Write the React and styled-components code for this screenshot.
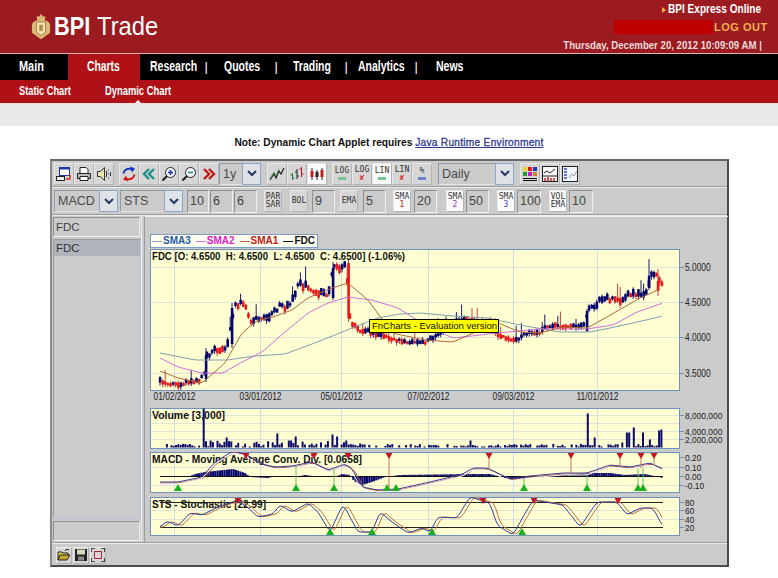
import React from "react";
import styled, { createGlobalStyle } from "styled-components";

const GlobalStyle = createGlobalStyle`
  html, body { margin: 0; padding: 0; background: #fff; }
  body { font-family: "Liberation Sans", Arial, sans-serif; }
`;

/* no narrow face is installed, the header text is squeezed sideways instead */
const Squeeze = styled.span`
  display: inline-block;
  width: ${({ $w }) => ($w ? `${$w}px` : "auto")};
  white-space: nowrap;
  transform: scaleX(${({ $x }) => $x});
  transform-origin: ${({ $right }) => ($right ? "right" : "left")} center;
`;

/* ---------- site header ---------- */
const Page = styled.div`
  width: 778px;
  height: 578px;
  overflow: hidden;
  background: #fff;
`;

const TopBar = styled.header`
  height: 53px;
  background: #9b1b20;
  border-bottom: 1px solid #dcb4b4;
  display: flex;
  justify-content: space-between;
`;

const Brand = styled.div`
  display: flex;
  align-items: center;
  padding: 0 0 1px 31px;
  gap: 3px;
  color: #fff;
  font-size: 25px;
  line-height: 1;
  font-weight: 400;
`;

const BrandBold = styled(Squeeze)`
  font-weight: 700;
  margin-right: 4px;
`;

const Account = styled.div`
  width: 250px;
  padding: 2px 16px 0 0;
  box-sizing: border-box;
  display: flex;
  flex-direction: column;
  align-items: flex-end;
`;

const ExpressLink = styled.div`
  display: flex;
  align-items: center;
  gap: 2px;
  height: 15px;
  color: #fff;
  font-size: 12px;
  font-weight: 700;
  line-height: 15px;
`;

const ExpressMark = styled.i`
  width: 0;
  height: 0;
  border: 3px solid transparent;
  border-left: 4px solid #f0b040;
  border-right: 0;
`;

const LogoutRow = styled.div`
  display: flex;
  height: 14px;
  margin-top: 3px;
  align-items: center;
`;

const Redacted = styled.div`
  width: 99px;
  height: 14px;
  background: #c00000;
`;

const Logout = styled.div`
  color: #f2b350;
  font-weight: 700;
  font-size: 11px;
  letter-spacing: 0.5px;
  width: 48px;
  padding-left: 1px;
  white-space: nowrap;
`;

const DateLine = styled.div`
  margin-top: 4px;
  color: #f0dcdc;
  font-size: 11px;
  line-height: 14px;
  font-weight: 700;
`;

const NavBar = styled.nav`
  height: 26px;
  background: #000;
  display: flex;
`;

const NavItem = styled.div`
  width: ${({ $w }) => $w}px;
  padding-left: ${({ $pl }) => $pl}px;
  box-sizing: border-box;
  line-height: 25px;
  color: #fff;
  font-size: 14px;
  font-weight: 700;
  background: ${({ $active }) => ($active ? "#b01116" : "transparent")};
  display: flex;
  justify-content: space-between;
`;

const NavBarSep = styled.i`
  font-style: normal;
  font-weight: 400;
  font-size: 13px;
  margin-right: 2px;
`;

const SubNav = styled.div`
  height: 23px;
  background: #b01116;
  border-bottom: 1px solid #f6dede;
  display: flex;
  color: #fff;
  font-size: 12.5px;
  font-weight: 700;
  line-height: 22px;
  padding-left: 19px;
  gap: 34px;
`;

const SubLink = styled.div`
  position: relative;
  width: ${({ $w }) => $w}px;
  &[data-on="true"]::after {
    content: "";
    position: absolute;
    left: 50%;
    bottom: 0;
    margin-left: -3px;
    border: 3px solid transparent;
    border-top: 0;
    border-bottom-color: #fff;
  }
`;

const Band = styled.div`
  height: 22px;
  background: #e9e9e9;
`;

const Note = styled.p`
  margin: 0;
  height: 33px;
  line-height: 34px;
  text-align: center;
  font-size: 10.2px;
  font-weight: 700;
  color: #111;
  a {
    color: #2f3a8f;
    text-decoration: underline;
    font-weight: 400;
    letter-spacing: 0.25px;
    -webkit-text-stroke: 0.3px #2f3a8f;
  }
`;

/* ---------- applet frame ---------- */
const Applet = styled.section`
  width: 679px;
  height: 408px;
  margin-left: 50px;
  box-sizing: border-box;
  background: #cbcbcb;
  border: 2px solid #5f5f5f;
  border-color: #666 #4a4a4a #4a4a4a #8a8a8a;
  display: flex;
  flex-direction: column;
  color: #444;
`;

const Toolbar = styled.div`
  flex: none;
  height: ${({ $h }) => $h}px;
  box-sizing: border-box;
  display: flex;
  align-items: center;
  padding-left: 2px;
  border-bottom: 1px solid #9c9c9c;
  box-shadow: 0 1px 0 #ececec;
  margin-bottom: 1px;
`;

const Group = styled.div`
  display: flex;
  margin-left: ${({ $ml }) => $ml || 0}px;
`;

const IconBtn = styled.div`
  width: 20px;
  height: 22px;
  box-sizing: border-box;
  display: flex;
  align-items: center;
  justify-content: center;
  background: ${({ $on }) => ($on ? "#fafafa" : "#d6d6d6")};
  border: 1px solid;
  border-color: #e8e8e8 #b4b4b4 #b4b4b4 #e8e8e8;
`;

const TextBtn = styled.div`
  width: ${({ $w }) => $w || 20}px;
  height: 22px;
  margin-left: ${({ $ml }) => $ml || 0}px;
  box-sizing: border-box;
  display: flex;
  flex-direction: column;
  align-items: center;
  justify-content: center;
  background: ${({ $on }) => ($on ? "#fafafa" : "#d6d6d6")};
  border: 1px solid;
  border-color: #e8e8e8 #b4b4b4 #b4b4b4 #e8e8e8;
  font-family: "DejaVu Sans Mono", "Liberation Mono", monospace;
  font-size: 8px;
  line-height: 8px;
  color: #333;
`;

const Mark = styled.span`
  color: ${({ $c }) => $c};
  line-height: 8px;
  font-size: 8px;
`;

const Flat = styled.i`
  display: block;
  width: 8px;
  height: 3px;
  margin-top: 2px;
  background: ${({ $c }) => $c};
`;

const SelectBox = styled.div`
  width: ${({ $w }) => $w}px;
  height: 22px;
  margin-left: ${({ $ml }) => $ml || 0}px;
  box-sizing: border-box;
  display: flex;
  justify-content: space-between;
  border: 1px solid;
  border-color: #8d9cad #e4e4e4 #e4e4e4 #8d9cad;
  font-size: 12.5px;
  line-height: 20px;
  padding-left: 3px;
  color: #4a4a4a;
`;

const SelectArrow = styled.div`
  width: 17px;
  margin: -1px -1px -1px 0;
  display: flex;
  align-items: center;
  justify-content: center;
  background: #dfe2e6;
  border: 1px solid #8ea6c6;
`;

const Field = styled.div`
  width: ${({ $w }) => $w}px;
  height: 23px;
  margin-left: ${({ $ml }) => $ml || 0}px;
  box-sizing: border-box;
  border: 1px solid;
  border-color: #8f8f8f #efefef #efefef #8f8f8f;
  font-size: 12.5px;
  line-height: 20px;
  padding-left: 2px;
  color: #444;
`;

const Workspace = styled.div`
  flex: none;
  height: 326px;
  display: flex;
  border-bottom: 1px solid #9c9c9c;
  box-shadow: 0 1px 0 #ececec;
`;

const Sidebar = styled.aside`
  flex: none;
  width: 90px;
  padding: 1px 0 1px 1px;
  box-sizing: border-box;
  display: flex;
  flex-direction: column;
  gap: 2px;
  border-right: 1px solid #f0f0f0;
`;

const SymbolInput = styled.div`
  flex: none;
  height: 20px;
  width: 87px;
  box-sizing: border-box;
  border: 1px solid;
  border-color: #8f8f8f #efefef #efefef #8f8f8f;
  font-size: 11.5px;
  line-height: 18px;
  padding-left: 2px;
`;

const SymbolList = styled.div`
  flex: 1;
  width: 88px;
  box-sizing: border-box;
  border: 1px solid;
  border-color: #9a9a9a #b5c6da #b5c6da #9a9a9a;
`;

const SymbolRow = styled.div`
  height: 16px;
  background: #b1b4ba;
  font-size: 11.5px;
  line-height: 16px;
  padding-left: 2px;
  color: #333;
`;

const StatusBox = styled.div`
  flex: none;
  height: 20px;
  width: 87px;
  box-sizing: border-box;
  border: 1px solid;
  border-color: #8f8f8f #efefef #efefef #8f8f8f;
`;

const ChartArea = styled.div`
  margin-left: 2px;
  flex: 1;
  padding: 17px 0 0 5px;
  border-left: 1px solid #9c9c9c;
  border-top: 1px solid #efefef;
  display: flex;
  flex-direction: column;
  gap: 3px;
`;

const Legend = styled.div`
  flex: none;
  align-self: flex-start;
  height: 14px;
  margin-bottom: -2px;
  padding: 0 1px;
  display: flex;
  gap: 5px;
  box-sizing: border-box;
  width: 168px;
  background: #fffff0;
  border: 1px solid #7d9dc0;
  font-size: 10px;
  font-weight: 700;
  line-height: 12px;
  white-space: nowrap;
`;

const LegendItem = styled.span`
  color: ${({ $c }) => $c};
  &::before {
    content: "";
    display: inline-block;
    vertical-align: middle;
    width: 10px;
    height: 1px;
    margin-right: 1px;
    background: ${({ $line }) => $line};
  }
`;

const PaneWrap = styled.div`
  position: relative;
  flex: none;
  height: 156px;
`;

const Pane = styled.svg`
  display: block;
  flex: none;
  width: 578px;
  height: ${({ $h }) => $h}px;
  font-family: "Liberation Sans", Arial, sans-serif;
`;

const EvalTag = styled.div`
  position: absolute;
  left: 219px;
  top: 70px;
  width: 130px;
  height: 14px;
  box-sizing: border-box;
  background: #ffff00;
  border: 1px solid #000;
  color: #111;
  font-size: 9.5px;
  line-height: 12px;
  padding-left: 2px;
  white-space: nowrap;
`;

const Footer = styled.footer`
  flex: 1;
  display: flex;
  align-items: center;
  padding: 1px 0 0 4px;
  margin-top: 1px;
`;

const SmallBtn = styled.div`
  width: 16px;
  height: 17px;
  margin-right: 1px;
  display: flex;
  align-items: center;
  justify-content: center;
  background: #d6d6d6;
  border: 1px solid;
  border-color: #ececec #b0b0b0 #b0b0b0 #ececec;
  box-sizing: border-box;
`;

/* ---------- data ---------- */
const rng = (seed) => () => {
  seed = (seed * 16807) % 2147483647;
  return seed / 2147483647;
};

const at = (pts, x) => {
  if (x <= pts[0][0]) return pts[0][1];
  for (let i = 1; i < pts.length; i++) {
    if (x <= pts[i][0]) {
      const [x0, y0] = pts[i - 1];
      const [x1, y1] = pts[i];
      return y0 + ((y1 - y0) * (x - x0)) / (x1 - x0);
    }
  }
  return pts[pts.length - 1][1];
};

const line = (pts) => pts.map((p) => p.join(",")).join(" ");

const resample = (pts, shift = 0, step = 2) => {
  const out = [];
  const end = pts[pts.length - 1][0];
  for (let x = pts[0][0]; x <= end; x += step) {
    const a = at(pts, x - shift - 2);
    const b = at(pts, x - shift);
    const c = at(pts, x - shift + 2);
    out.push([x, +((a + b + c) / 3).toFixed(1)]);
  }
  return out;
};

const CLOSE = [
  [160, 381], [172, 384], [180, 385], [190, 381], [200, 381], [204, 375], [206, 358], [212, 350],
  [222, 349], [226, 347], [228, 340], [232, 320], [235, 305], [240, 303], [245, 307], [250, 322],
  [252, 325], [256, 320], [260, 318], [268, 318], [272, 315], [276, 310], [280, 305], [285, 308],
  [290, 305], [295, 295], [297, 285], [300, 285], [310, 287], [317, 292], [325, 295], [328, 296],
  [331, 275], [335, 265], [340, 270], [346, 265], [348, 295], [350, 320], [353, 325], [360, 331],
  [368, 331], [375, 335], [385, 336], [395, 340], [405, 342], [415, 343], [425, 342], [432, 338],
  [445, 330], [455, 322], [465, 318], [475, 322], [490, 330], [500, 335], [510, 340], [517, 340],
  [522, 335], [530, 333], [540, 333], [545, 327], [555, 325], [565, 327], [575, 326], [585, 325],
  [588, 310], [595, 306], [600, 300], [605, 298], [612, 299], [620, 302], [625, 296], [640, 294],
  [647, 294], [650, 278], [655, 272], [660, 280], [665, 285],
];

/* the long candles that stand out in the series */
const BIG_CANDLES = [
  { x: 206, top: 355, h: 24, up: true, hi: 348, lo: 382 },
  { x: 232, top: 308, h: 36, up: true, hi: 303, lo: 348 },
  { x: 333, top: 268, h: 30, up: true, hi: 262, lo: 300 },
  { x: 348.5, top: 263, h: 55, up: false, hi: 260, lo: 322 },
  { x: 587, top: 311, h: 20, up: true, hi: 309, lo: 332 },
  { x: 649, top: 276, h: 12, up: true, hi: 259, lo: 290 },
  { x: 658, top: 281, h: 10, up: false, hi: 269, lo: 296 },
];

const SMA3 = [
  [160, 353], [195, 360], [228, 360], [255, 356], [285, 354], [312, 344], [335, 335], [352, 328],
  [378, 318], [400, 314], [420, 313], [453, 316], [487, 318], [520, 325], [537, 328], [560, 332],
  [590, 332], [610, 328], [633, 323], [663, 316],
];
const SMA2 = [
  [160, 358], [178, 367], [202, 373], [223, 373], [242, 362], [262, 352], [285, 332], [308, 313],
  [328, 303], [348, 297], [372, 300], [398, 308], [425, 325], [453, 338], [498, 333], [540, 329],
  [587, 329], [613, 325], [637, 312], [663, 303],
];
const SMA1 = [
  [160, 371], [178, 378], [202, 383], [225, 363], [242, 333], [258, 320], [273, 317], [292, 310],
  [308, 298], [332, 288], [348, 283], [368, 300], [392, 333], [425, 340], [453, 342], [480, 330],
  [498, 323], [520, 332], [540, 333], [563, 327], [587, 328], [607, 317], [640, 298], [660, 289],
];
const MACD = [
  [160, 483], [178, 483], [202, 478], [215, 463], [233, 452], [245, 455], [262, 465], [275, 468],
  [292, 467], [312, 463], [328, 471], [345, 465], [352, 470], [362, 488], [378, 491], [398, 490],
  [430, 483], [463, 475], [473, 469], [487, 469], [510, 480], [530, 477], [563, 474], [587, 474],
  [610, 466], [630, 468], [650, 464], [663, 470],
];
const STOCH = [
  [160, 527], [167, 521], [178, 526], [190, 513], [202, 515], [218, 507], [235, 501], [245, 505],
  [258, 517], [273, 514], [280, 505], [292, 512], [308, 503], [318, 512], [330, 532], [343, 504],
  [358, 532], [372, 532], [380, 512], [392, 522], [408, 533], [422, 528], [430, 532], [438, 517],
  [457, 518], [470, 497], [490, 503], [497, 525], [513, 535], [523, 517], [533, 500], [563, 505],
  [580, 527], [597, 502], [617, 502], [627, 515], [640, 508], [653, 508], [663, 527],
];

const VGRID = [174, 260, 341, 428, 513, 597];

const makeCandles = () => {
  const r = rng(4242);
  const list = [];
  const step = 2.6;
  for (let x = 160; x <= 663; x += step) {
    const wide = x > 200 && x < 350 ? 5 : x > 585 ? 5 : 2.4;
    const c = at(CLOSE, x) + (r() - 0.5) * wide;
    const prev = at(CLOSE, x - step);
    const body = 2 + r() * (wide + 1);
    const up = c < prev - 0.6 || (Math.abs(c - prev) <= 0.6 && r() > 0.55);
    const top = c - body / 2;
    const tall = r() > 0.84 ? 4 + r() * 11 : r() * 2;
    list.push({ x, top, h: body, up, hi: top - tall, lo: top + body + r() * 3 });
  }
  return list.concat(BIG_CANDLES);
};

const makeVolume = () => {
  const r = rng(777);
  const spikes = {
    204: 39, 210: 7, 227: 10, 232: 6, 277: 14, 290: 7, 295: 11, 332: 13, 338: 11, 347: 7, 360: 4, 470: 7,
    587: 34, 595: 10, 622: 5, 628: 15, 633: 20, 643: 15, 650: 8, 658: 17, 661: 18,
  };
  const bars = [];
  for (let x = 160; x <= 663; x += 2.3) {
    const key = Object.keys(spikes).find((k) => Math.abs(k - x) < 1.2);
    if (key) bars.push([x, spikes[key]]);
    else if (r() > 0.28) bars.push([x, 1 + r() * (x > 205 && x < 350 ? 6 : 2.6)]);
  }
  return bars;
};

const makeHisto = () => {
  const env = [
    [160, 0], [190, 0], [195, 2], [205, 4], [233, 7], [245, 3], [250, -1], [268, -2], [275, 0], [300, 0],
    [305, 1], [320, -1], [335, -1], [342, 2], [350, 1], [354, -5], [362, -9], [372, -6], [385, -1], [400, 1],
    [475, 2], [490, 2], [505, -2], [520, -3], [540, 0], [560, 1], [570, 1], [590, 3], [610, 3], [625, 1],
    [645, 2], [663, -2],
  ];
  const bars = [];
  for (let x = 160; x <= 663; x += 2.3) bars.push([x, at(env, x)]);
  return bars;
};

const CANDLES = makeCandles();
const VOLUME = makeVolume();
const HISTO = makeHisto();

/* axis text in the applet is narrower than Arial */
const labelWidth = (s) =>
  [...s].reduce((w, ch) => w + (/\d/.test(ch) ? 5.56 : ch === "-" ? 3.33 : 2.78), 0) * 0.84;

/* ---------- chart parts ---------- */
const Plot = ({ top, bottom, grid, ticks, size = 8.5 }) => (
  <>
    <rect x="150.5" y={top + 0.5} width="529" height={bottom - top} fill="#ffffd2" stroke="#6e93bb" />
    {grid.map((y) => (
      <line key={y} x1="151" x2="679" y1={y + 0.5} y2={y + 0.5} stroke="#dfe3d8" />
    ))}
    {VGRID.map((x) => (
      <line key={x} x1={x + 0.5} x2={x + 0.5} y1={top + 1} y2={bottom} stroke="#cfdbe2" />
    ))}
    {ticks.map(([y, label]) => (
      <g key={label}>
        <line x1="680" x2="684" y1={y + 0.5} y2={y + 0.5} stroke="#6e93bb" />
        <text
          x="685"
          y={y + 3.5}
          fontSize={size}
          fill="#222"
          textLength={labelWidth(label)}
          lengthAdjust="spacingAndGlyphs"
        >
          {label}
        </text>
      </g>
    ))}
  </>
);

const Title = ({ y, w, children }) => (
  <text
    x="152"
    y={y}
    fontSize="10.5"
    fontWeight="700"
    fill="#111"
    xmlSpace="preserve"
    textLength={w}
    lengthAdjust="spacingAndGlyphs"
  >
    {children}
  </text>
);

const Curve = ({ pts, color, w = 1 }) => (
  <polyline points={line(pts)} fill="none" stroke={color} strokeWidth={w} />
);

const Up = ({ x, base, stem }) => (
  <g>
    {stem && <line x1={x} x2={x} y1={stem} y2={base - 6} stroke="#62c45c" />}
    <polygon points={`${x - 4},${base} ${x + 4},${base} ${x},${base - 7}`} fill="#18b020" />
  </g>
);

const Down = ({ x, base, stem }) => (
  <g>
    {stem && <line x1={x} x2={x} y1={base + 5} y2={stem} stroke="#c07860" />}
    <polygon points={`${x - 3.5},${base} ${x + 3.5},${base} ${x},${base + 6}`} fill="#c8141e" />
  </g>
);

const MainPane = () => (
  <Pane $h={156} viewBox="150 249 578 156">
    <Plot
      top={249}
      bottom={390}
      size={10}
      grid={[267, 302, 337, 373]}
      ticks={[[267, "5.0000"], [302, "4.5000"], [337, "4.0000"], [373, "3.5000"]]}
    />
    <Title y={260} w={253}>{"FDC [O: 4.6500  H: 4.6500  L: 4.6500  C: 4.6500] (-1.06%)"}</Title>
    {CANDLES.map((c) => (
      <g key={c.x}>
        <line x1={c.x} x2={c.x} y1={c.hi} y2={c.lo} stroke={c.up ? "#1a1a70" : "#c04040"} />
        <rect x={c.x - 1.2} y={c.top} width="2.6" height={c.h} fill={c.up ? "#05056e" : "#e81818"} />
      </g>
    ))}
    <Curve pts={resample(SMA3)} color="#7f9fb0" />
    <Curve pts={resample(SMA2)} color="#d070d8" />
    <Curve pts={resample(SMA1)} color="#b06a3c" />
    {["01/02/2012", "03/01/2012", "05/01/2012", "07/02/2012", "09/03/2012", "11/01/2012"].map((d, i) => (
      <text
        key={d}
        x={VGRID[i] + 0.5 - 21}
        y="400"
        fontSize="10"
        fill="#222"
        textLength="42"
        lengthAdjust="spacingAndGlyphs"
      >
        {d}
      </text>
    ))}
  </Pane>
);

const VolumePane = () => (
  <Pane $h={41} viewBox="150 408 578 41">
    <Plot
      top={408}
      bottom={448}
      grid={[415, 423, 431, 439]}
      ticks={[[415, "8,000,000"], [431, "4,000,000"], [439, "2,000,000"]]}
    />
    <Title y={419} w={73}>Volume [3,000]</Title>
    {VOLUME.map(([x, h]) => (
      <rect key={x} x={x - 1} y={447.5 - h} width="2" height={h} fill="#0a0a6e" />
    ))}
  </Pane>
);

const MacdPane = () => (
  <Pane $h={41} viewBox="150 452 578 41">
    <Plot
      top={452}
      bottom={492}
      grid={[467, 485]}
      ticks={[[457, "0.20"], [467, "0.10"], [476, "0.00"], [485, "-0.10"]]}
    />
    <Title y={463} w={210}>MACD - Moving Average Conv. Div. [0.0658]</Title>
    {HISTO.map(([x, v]) => (
      <rect key={x} x={x - 1} y={v > 0 ? 476 - v : 476} width="2.2" height={Math.abs(v)} fill="#0a0a6e" />
    ))}
    <line x1="160" x2="663" y1="476.5" y2="476.5" stroke="#111" />
    <Curve pts={resample(MACD, 2)} color="#b8563c" />
    <Curve pts={resample(MACD, -0.5).map(([x, y]) => [x, y + 1])} color="#f4f4ff" />
    <Curve pts={resample(MACD).map(([x, y]) => [x, y - 1])} color="#3a3a9a" />
    {[[296, 467], [334, 469], [524, 478], [587, 475], [638, 468], [643, 468]].map(([x, s]) => (
      <Up key={x} x={x} base={491} stem={s} />
    ))}
    <Up x={178} base={491} />
    <Up x={387} base={491} />
    <Up x={396} base={491} />
    <Down x={246} base={453} />
    <Down x={314} base={453} />
    <Down x={348} base={453} />
    {[[389, 489], [489, 470], [571, 473], [620, 467], [641, 468], [654, 465]].map(([x, s]) => (
      <Down key={x} x={x} base={453} stem={s} />
    ))}
  </Pane>
);

const StochPane = () => (
  <Pane $h={41} viewBox="150 496 578 41">
    <Plot
      top={497}
      bottom={535}
      grid={[510, 519]}
      ticks={[[502, "80"], [510, "60"], [519, "40"], [527, "20"]]}
    />
    <Title y={508} w={114}>STS - Stochastic [22.99]</Title>
    <line x1="160" x2="663" y1="502.5" y2="502.5" stroke="#222" />
    <line x1="160" x2="663" y1="527.5" y2="527.5" stroke="#222" />
    <Curve pts={resample(STOCH, 4, 2)} color="#c07040" />
    <Curve pts={resample(STOCH, 0, 2)} color="#2f3f9a" />
    {[330, 372, 432, 522].map((x) => (
      <Up key={x} x={x} base={535} />
    ))}
    {[238, 483, 534, 618].map((x) => (
      <Down key={x} x={x} base={498} />
    ))}
  </Pane>
);

/* ---------- icons ---------- */
const Ico = styled.svg`
  width: ${({ $s }) => $s || 16}px;
  height: ${({ $h, $s }) => $h || $s || 16}px;
  display: block;
`;

const Crest = () => (
  <Ico $s={20} $h={27} viewBox="0 0 22 28">
    <path d="M11 0l2 3h3l-1 4c4 1 6 3 6 6v8l-10 7-10-7v-8c0-3 2-5 6-6L6 3h3z" fill="#dcb878" />
    <path d="M6 9h10v11l-5 4-5-4z" fill="#f4e4c0" stroke="#a87c38" />
    <path d="M9 12h4v7H9z" fill="#b98a44" />
  </Ico>
);

const Chevron = () => (
  <svg width="10" height="7" viewBox="0 0 10 7">
    <path d="M1 1l4 4 4-4" fill="none" stroke="#223a66" strokeWidth="2" />
  </svg>
);

const WindowIcon = () => (
  <Ico viewBox="0 0 16 16">
    <rect x="3.5" y="1.5" width="10" height="8" fill="#fff" stroke="#2038a8" />
    <rect x="3.5" y="1.5" width="10" height="2" fill="#2038a8" />
    <rect x="0.5" y="10.5" width="8" height="4" fill="#eee" stroke="#222" />
    <path d="M10 13h4v-3M12 9l2 1 1 0" fill="none" stroke="#d03020" strokeWidth="1.3" />
  </Ico>
);
const PrintIcon = () => (
  <Ico viewBox="0 0 16 16">
    <path d="M4 1.5h6l2 2v4H4z" fill="#fff" stroke="#222" />
    <path d="M1.5 7.5h13v5h-13z" fill="#bbb" stroke="#222" />
    <path d="M4 10.5h8v4H4z" fill="#fff" stroke="#222" />
  </Ico>
);
const SpeakerIcon = () => (
  <Ico viewBox="0 0 16 16">
    <path d="M1.5 5.5h3l4-4v13l-4-4h-3z" fill="#e8e6a8" stroke="#333" />
    <path d="M10.5 5v6M12.5 3.5v1M12.5 7.5v1M12.5 11.5v1M14.5 6v4" stroke="#333" />
  </Ico>
);
const RefreshIcon = () => (
  <Ico viewBox="0 0 16 16">
    <path d="M2.5 7.5C3 4 6 2 10 3l1 1" fill="none" stroke="#1a38c8" strokeWidth="2" />
    <path d="M9 0.5l5 2-3 4z" fill="#1a38c8" />
    <path d="M13.5 8.5C13 12 10 14 6 13l-1-1" fill="none" stroke="#d81818" strokeWidth="2" />
    <path d="M7 15.5l-5-2 3-4z" fill="#d81818" />
  </Ico>
);
const DoubleIcon = ({ color, flip }) => (
  <Ico viewBox="0 0 16 16" style={flip ? { transform: "scaleX(-1)" } : undefined}>
    <path d="M8 3L3 8l5 5M13 3L8 8l5 5" fill="none" stroke={color} strokeWidth="2.4" />
  </Ico>
);
const ZoomIcon = ({ plus }) => (
  <Ico viewBox="0 0 16 16">
    <circle cx="9.5" cy="6.5" r="5" fill="#f4f6ff" stroke="#222" />
    <path d="M6 10L1.5 14.5" stroke="#222" strokeWidth="2.2" />
    <path d="M7 6.5h5" stroke={plus ? "#2038c0" : "#30905a"} strokeWidth="1.6" />
    {plus && <path d="M9.5 4v5" stroke="#2038c0" strokeWidth="1.6" />}
  </Ico>
);
const LineIcon = () => (
  <Ico viewBox="0 0 16 16">
    <path d="M1 14l4-6 2 4 3-7 2 3 3-6" fill="none" stroke="#222" strokeWidth="1.2" />
    <path d="M1 12l4-6 2 4 3-7" fill="none" stroke="#2a8a2a" strokeWidth="0.7" />
  </Ico>
);
const BarsIcon = () => (
  <Ico viewBox="0 0 16 16">
    <path d="M3.5 7v7M1.5 9h2M3.5 12h2" stroke="#208030" fill="none" />
    <path d="M8 3v10M6 6h2M8 10h2" stroke="#222" fill="none" />
    <path d="M12.5 1v10M10.5 3h2M12.5 8h2" stroke="#b02020" fill="none" />
  </Ico>
);
const CandleIcon = () => (
  <Ico viewBox="0 0 16 16">
    <path d="M3 2v12M8 4v10M13 2v12" stroke="#222" />
    <rect x="1.5" y="5" width="3" height="6" fill="#c02020" />
    <rect x="6.5" y="6" width="3" height="5" fill="#222" />
    <rect x="11.5" y="4" width="3" height="7" fill="#c02020" />
  </Ico>
);
const PaletteIcon = () => (
  <Ico viewBox="0 0 16 16">
    <rect x="1" y="1" width="4" height="4" fill="#e8d820" />
    <rect x="6" y="1" width="4" height="4" fill="#d02020" />
    <rect x="11" y="1" width="4" height="4" fill="#2038c0" />
    <rect x="1" y="6" width="4" height="4" fill="#20a030" />
    <rect x="6" y="6" width="4" height="4" fill="#c020c0" />
    <rect x="11" y="6" width="4" height="4" fill="#e08020" />
    <rect x="1" y="12" width="14" height="1" fill="#111" />
    <rect x="1" y="14" width="14" height="1" fill="#111" />
  </Ico>
);
const PanelIcon = () => (
  <Ico viewBox="0 0 16 16">
    <rect x="0.5" y="0.5" width="15" height="15" fill="#f8f8f8" stroke="#222" />
    <path d="M2 7l3-2 3 2 5-4" fill="none" stroke="#222" />
    <path d="M1 10h14" stroke="#222" />
    <path d="M3 15v-3M6 15v-4M9 15v-3M12 15v-3" stroke="#d02020" strokeWidth="1.5" />
  </Ico>
);
const TableIcon = () => (
  <Ico viewBox="0 0 16 16">
    <rect x="0.5" y="0.5" width="15" height="15" fill="#f4f6ff" stroke="#222" />
    <path d="M2 3h3M2 6h3M2 9h3M2 12h3" stroke="#2a48c8" strokeWidth="1.6" />
    <path d="M7 12l3-4 2 2 3-5" fill="none" stroke="#999" />
  </Ico>
);
const OpenIcon = () => (
  <Ico $s={14} viewBox="0 0 14 14">
    <path d="M1 12V4h4l1 1h5v2" fill="#e6d260" stroke="#222" />
    <path d="M1 12l2-5h10l-3 5z" fill="#c0a830" stroke="#222" />
    <path d="M8 3c1-2 3-2 4-1" fill="none" stroke="#222" />
  </Ico>
);
const SaveIcon = () => (
  <Ico $s={14} viewBox="0 0 14 14">
    <rect x="1" y="1" width="12" height="12" fill="#222" />
    <rect x="3" y="1.5" width="8" height="5" fill="#d8d8c0" />
    <rect x="4" y="8.5" width="6" height="4" fill="#888" />
  </Ico>
);
const FitIcon = () => (
  <Ico $s={14} viewBox="0 0 14 14">
    <rect x="3.5" y="3.5" width="7" height="7" fill="#e8d0d8" stroke="#a03040" />
    <path d="M0 4V0h4M10 0h4v4M14 10v4h-4M4 14H0v-4" fill="none" stroke="#222" strokeWidth="1.6" />
  </Ico>
);

const App = () => (
  <Page>
    <GlobalStyle />
    <TopBar>
      <Brand>
        <Crest />
        <BrandBold $w={36} $x={0.87}>BPI</BrandBold>
        <Squeeze $w={61} $x={0.95}>Trade</Squeeze>
      </Brand>
      <Account>
        <ExpressLink>
          <ExpressMark />
          <Squeeze $w={94} $x={0.84}>BPI Express Online</Squeeze>
        </ExpressLink>
        <LogoutRow>
          <Redacted />
          <Logout>LOG OUT</Logout>
        </LogoutRow>
        <DateLine>
          <Squeeze $x={0.875} $right>Thursday, December 20, 2012 10:09:09 AM |</Squeeze>
        </DateLine>
      </Account>
    </TopBar>

    <NavBar>
      <NavItem $w={68} $pl={19}><Squeeze $w={26} $x={0.78}>Main</Squeeze></NavItem>
      <NavItem $w={72} $pl={19} $active><Squeeze $w={33} $x={0.74}>Charts</Squeeze></NavItem>
      <NavItem $w={70} $pl={10}><Squeeze $w={46} $x={0.75}>Research</Squeeze><NavBarSep>|</NavBarSep></NavItem>
      <NavItem $w={70} $pl={14}><Squeeze $w={36} $x={0.75}>Quotes</Squeeze><NavBarSep>|</NavBarSep></NavItem>
      <NavItem $w={70} $pl={13}><Squeeze $w={38} $x={0.75}>Trading</Squeeze><NavBarSep>|</NavBarSep></NavItem>
      <NavItem $w={70} $pl={8}><Squeeze $w={47} $x={0.75}>Analytics</Squeeze><NavBarSep>|</NavBarSep></NavItem>
      <NavItem $w={60} $pl={16}><Squeeze $w={28} $x={0.75}>News</Squeeze></NavItem>
    </NavBar>
    <SubNav>
      <SubLink $w={52}><Squeeze $w={52} $x={0.74}>Static Chart</Squeeze></SubLink>
      <SubLink $w={66} data-on="true"><Squeeze $w={66} $x={0.75}>Dynamic Chart</Squeeze></SubLink>
    </SubNav>
    <Band />
    <Note>
      Note: Dynamic Chart Applet requires <a href="#java">Java Runtime Environment</a>
    </Note>

    <Applet>
      <Toolbar $h={26}>
        <Group>
          <IconBtn><WindowIcon /></IconBtn>
          <IconBtn><PrintIcon /></IconBtn>
          <IconBtn><SpeakerIcon /></IconBtn>
        </Group>
        <Group $ml={5}>
          <IconBtn><RefreshIcon /></IconBtn>
          <IconBtn><DoubleIcon color="#20908a" /></IconBtn>
          <IconBtn><ZoomIcon plus /></IconBtn>
          <IconBtn><ZoomIcon /></IconBtn>
          <IconBtn><DoubleIcon color="#c01818" flip /></IconBtn>
        </Group>
        <SelectBox $w={42}>1y<SelectArrow><Chevron /></SelectArrow></SelectBox>
        <Group $ml={6}>
          <IconBtn><LineIcon /></IconBtn>
          <IconBtn><BarsIcon /></IconBtn>
          <IconBtn $on><CandleIcon /></IconBtn>
        </Group>
        <Group $ml={5}>
          <TextBtn>LOG<Flat $c="#70c890" /></TextBtn>
          <TextBtn>LOG<Mark $c="#d03030">✘</Mark></TextBtn>
          <TextBtn $on>LIN<Flat $c="#70c890" /></TextBtn>
          <TextBtn>LIN<Mark $c="#d03030">✘</Mark></TextBtn>
          <TextBtn>%<Flat $c="#7080d0" /></TextBtn>
        </Group>
        <SelectBox $w={76} $ml={6}>Daily<SelectArrow><Chevron /></SelectArrow></SelectBox>
        <Group $ml={6}>
          <IconBtn><PaletteIcon /></IconBtn>
          <IconBtn><PanelIcon /></IconBtn>
          <IconBtn><TableIcon /></IconBtn>
        </Group>
      </Toolbar>

      <Toolbar $h={27}>
        <SelectBox $w={64}>MACD<SelectArrow><Chevron /></SelectArrow></SelectBox>
        <SelectBox $w={63} $ml={2}>STS<SelectArrow><Chevron /></SelectArrow></SelectBox>
        <Field $w={22} $ml={4}>10</Field>
        <Field $w={23} $ml={1}>6</Field>
        <Field $w={23} $ml={1}>6</Field>
        <TextBtn $w={18} $ml={7}>PAR<br />SAR</TextBtn>
        <TextBtn $w={18} $ml={8}>BOL</TextBtn>
        <Field $w={23} $ml={4}>9</Field>
        <TextBtn $w={18} $ml={5}>EMA</TextBtn>
        <Field $w={23} $ml={5}>5</Field>
        <TextBtn $w={18} $ml={7} $on>SMA<Mark $c="#c02020">1</Mark></TextBtn>
        <Field $w={23} $ml={3}>20</Field>
        <TextBtn $w={18} $ml={9} $on>SMA<Mark $c="#a030c0">2</Mark></TextBtn>
        <Field $w={23} $ml={2}>50</Field>
        <TextBtn $w={18} $ml={8} $on>SMA<Mark $c="#3040c0">3</Mark></TextBtn>
        <Field $w={24} $ml={2}>100</Field>
        <TextBtn $w={18} $ml={8} $on>VOL<br />EMA</TextBtn>
        <Field $w={24} $ml={2}>10</Field>
      </Toolbar>

      <Workspace>
        <Sidebar>
          <SymbolInput>FDC</SymbolInput>
          <SymbolList><SymbolRow>FDC</SymbolRow></SymbolList>
          <StatusBox />
        </Sidebar>
        <ChartArea>
          <Legend>
            <LegendItem $c="#2458a8" $line="#7f9fb0">SMA3</LegendItem>
            <LegendItem $c="#e020c8" $line="#d070d8">SMA2</LegendItem>
            <LegendItem $c="#c01818" $line="#b06a3c">SMA1</LegendItem>
            <LegendItem $c="#111" $line="#111">FDC</LegendItem>
          </Legend>
          <PaneWrap>
            <MainPane />
            <EvalTag>FnCharts - Evaluation version</EvalTag>
          </PaneWrap>
          <VolumePane />
          <MacdPane />
          <StochPane />
        </ChartArea>
      </Workspace>

      <Footer>
        <SmallBtn><OpenIcon /></SmallBtn>
        <SmallBtn><SaveIcon /></SmallBtn>
        <SmallBtn><FitIcon /></SmallBtn>
      </Footer>
    </Applet>
  </Page>
);

export default App;
